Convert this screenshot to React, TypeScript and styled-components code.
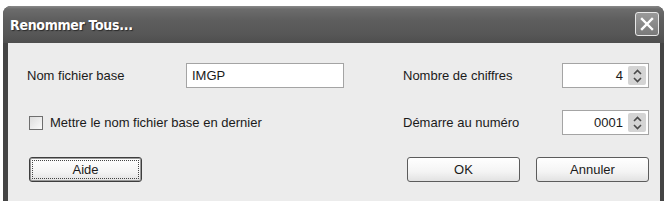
import React, { FC } from "react";
import styled, { createGlobalStyle } from "styled-components";

const Global = createGlobalStyle`
  html, body {
    margin: 0;
    padding: 0;
    background: #ffffff;
  }
  body {
    font-family: "Liberation Sans", Arial, sans-serif;
  }
`;

const Page = styled.div`
  width: 667px;
  height: 201px;
  padding: 6px 3px 0 3px;
  box-sizing: border-box;
  overflow: hidden;
`;

const Window = styled.div`
  width: 661px;
  height: 195px;
  border-radius: 8px 8px 0 0;
  background: #444444;
  display: flex;
  flex-direction: column;
  overflow: hidden;
`;

const TitleBar = styled.div`
  height: 37px;
  flex: none;
  display: flex;
  align-items: center;
  justify-content: space-between;
  padding: 0 5px 0 7px;
  background: linear-gradient(
    to bottom,
    #8a8a8a 0px,
    #6c6c6c 3px,
    #5e5e5e 14px,
    #575757 28px,
    #4e4e4e 37px
  );
`;

const Title = styled.span`
  color: #ffffff;
  font-family: "DejaVu Sans Condensed", "Liberation Sans", sans-serif;
  font-weight: bold;
  font-size: 14px;
  letter-spacing: -0.3px;
  text-shadow: 1px 1px 1px #2a2a2a;
`;

const CloseButton = styled.div`
  width: 22px;
  height: 22px;
  border: 1px solid #e8e8e8;
  border-radius: 3px;
  background: linear-gradient(to bottom, #9a9a9a, #7a7a7a);
  display: flex;
  align-items: center;
  justify-content: center;
  margin-top: -1px;
`;

const Body = styled.div`
  flex: 1;
  margin: 0 4px 0 5px;
  background: #ececec;
  padding: 20px 11px 0 19px;
  box-sizing: border-box;
  display: flex;
  flex-direction: column;
`;

const Fields = styled.div`
  display: grid;
  grid-template-columns: 159px 158px 59px 159px 87px;
  grid-template-rows: 25px 25px;
  row-gap: 22px;
  align-items: center;
`;

const Label = styled.span`
  font-size: 13px;
  color: #1a1a1a;
`;

const TextBox = styled.div`
  height: 25px;
  box-sizing: border-box;
  border: 1px solid #a4a4a4;
  background: #ffffff;
  font-size: 13px;
  color: #1a1a1a;
  display: flex;
  align-items: center;
  padding-left: 5px;
`;

const CheckRow = styled.label`
  grid-column: 1 / span 2;
  display: flex;
  align-items: center;
  gap: 7px;
  padding-left: 2px;
`;

const Box = styled.span`
  width: 14px;
  height: 14px;
  box-sizing: border-box;
  border: 1px solid #6e6e6e;
  background: linear-gradient(135deg, #dcdcdc, #fafafa);
`;

const Spinner = styled.div`
  height: 25px;
  box-sizing: border-box;
  border: 1px solid #a4a4a4;
  background: #ffffff;
  display: flex;
  align-items: stretch;
  padding: 2px 2px 2px 1px;
`;

const SpinValue = styled.span`
  flex: 1;
  font-size: 13px;
  color: #1a1a1a;
  display: flex;
  align-items: center;
  justify-content: flex-end;
  padding-right: 5px;
`;

const SpinArrows = styled.div`
  width: 18px;
  background: #d4d4d4;
  border-radius: 2px;
  display: flex;
  align-items: center;
  justify-content: center;
`;

const ButtonBar = styled.div`
  display: flex;
  align-items: center;
  margin-top: 22px;
  padding-left: 2px;
`;

const Button = styled.button<{ $primary?: boolean; $gapLeft?: number }>`
  width: 113px;
  height: 25px;
  box-sizing: border-box;
  margin-left: ${(p) => (p.$gapLeft !== undefined ? `${p.$gapLeft}px` : "auto")};
  border: 1px solid ${(p) => (p.$primary ? "#3e3e3e" : "#5c5c5c")};
  border-radius: 3px;
  background: linear-gradient(to bottom, #ffffff, #f4f4f4 60%, #e2e2e2);
  font-family: "Liberation Sans", Arial, sans-serif;
  font-size: 13px;
  color: #1a1a1a;
  padding: 0;
  position: relative;
  box-shadow: ${(p) => (p.$primary ? "inset 0 0 0 1px #9a9a9a" : "none")};

  &::after {
    content: "";
    display: ${(p) => (p.$primary ? "block" : "none")};
    position: absolute;
    inset: 2px;
    border: 1px dotted #444444;
  }
`;

const Arrows: FC = () => (
  <svg width="11" height="16" viewBox="0 0 11 16">
    <path d="M2 6 L5.5 2.5 L9 6" fill="none" stroke="#4a4a4a" strokeWidth="1.6" />
    <path d="M2 10 L5.5 13.5 L9 10" fill="none" stroke="#4a4a4a" strokeWidth="1.6" />
  </svg>
);

const CloseIcon: FC = () => (
  <svg width="14" height="14" viewBox="0 0 14 14">
    <path d="M2 2 L12 12 M12 2 L2 12" stroke="#ffffff" strokeWidth="2.4" strokeLinecap="square" />
  </svg>
);

const App: FC = () => (
  <>
    <Global />
    <Page>
      <Window>
        <TitleBar>
          <Title>Renommer Tous...</Title>
          <CloseButton>
            <CloseIcon />
          </CloseButton>
        </TitleBar>
        <Body>
          <Fields>
            <Label>Nom fichier base</Label>
            <TextBox>IMGP</TextBox>
            <span />
            <Label>Nombre de chiffres</Label>
            <Spinner>
              <SpinValue>4</SpinValue>
              <SpinArrows>
                <Arrows />
              </SpinArrows>
            </Spinner>

            <CheckRow>
              <Box />
              <Label>Mettre le nom fichier base en dernier</Label>
            </CheckRow>
            <span />
            <Label>Démarre au numéro</Label>
            <Spinner>
              <SpinValue>0001</SpinValue>
              <SpinArrows>
                <Arrows />
              </SpinArrows>
            </Spinner>
          </Fields>
          <ButtonBar>
            <Button $primary $gapLeft={0}>Aide</Button>
            <Button>OK</Button>
            <Button $gapLeft={16}>Annuler</Button>
          </ButtonBar>
        </Body>
      </Window>
    </Page>
  </>
);

export default App;
